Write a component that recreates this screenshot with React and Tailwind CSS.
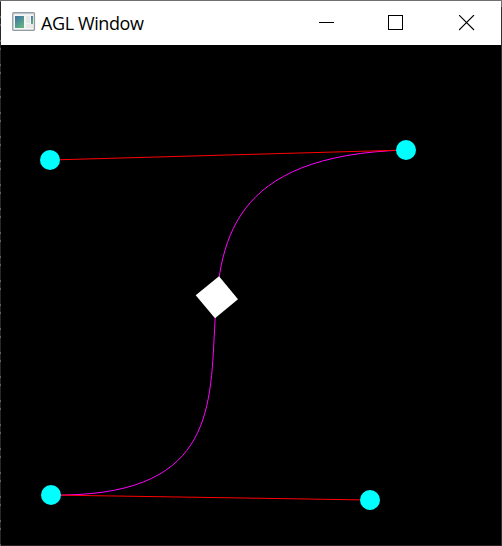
function WindowIcon() {
  return (
    <svg width="24" height="20" viewBox="0 0 24 20" className="shrink-0" shapeRendering="crispEdges">
      <defs>
        <linearGradient id="pane" x1="0" y1="0" x2="0.6" y2="1">
          <stop offset="0" stopColor="#3b70a5" />
          <stop offset="1" stopColor="#61b184" />
        </linearGradient>
      </defs>
      <rect x="0.75" y="0.75" width="21.7" height="17.7" rx="1" fill="#eceeef" stroke="#969ba1" strokeWidth="1.3" shapeRendering="auto" />
      <rect x="2" y="1" width="20" height="1" fill="#bcc4cc" />
      <rect x="2" y="3" width="19" height="14" fill="#f5f5f5" />
      <rect x="3" y="4" width="9" height="12" fill="url(#pane)" />
      <rect x="14" y="4" width="4" height="7" fill="#e6e6e6" />
      <rect x="14" y="12" width="7" height="4" fill="#e9e9e9" />
      <rect x="19" y="4" width="2" height="8" fill="url(#pane)" />
    </svg>
  );
}

function TitleBar() {
  return (
    <header className="flex h-[44px] shrink-0 items-center bg-white pl-[11px] text-black">
      <div className="mb-[3px]">
        <WindowIcon />
      </div>
      <h1 className="ml-[5px] flex-1 font-['Open_Sans','Noto_Sans',sans-serif] text-[18px] leading-6 tracking-[-0.4px] whitespace-nowrap">
        AGL Window
      </h1>
      <div className="flex h-full">
        <button aria-label="Minimize" className="flex w-[70px] items-start justify-center pt-[14px] pl-[2px]">
          <svg width="16" height="16" shapeRendering="crispEdges">
            <path d="M0 7.5H15" stroke="#000" />
          </svg>
        </button>
        <button aria-label="Maximize" className="flex w-[70px] items-start justify-center pt-[14px]">
          <svg width="16" height="16" shapeRendering="crispEdges">
            <rect x="0.5" y="0.5" width="14" height="14" fill="none" stroke="#000" />
          </svg>
        </button>
        <button aria-label="Close" className="flex w-[70px] items-start justify-center pt-[14px] pl-[2px]">
          <svg width="16" height="16">
            <path d="M0 0L15 15M15 0L0 15" stroke="#000" strokeWidth="1.1" />
          </svg>
        </button>
      </div>
    </header>
  );
}

const points = [
  [51, 495],
  [370, 500],
  [50, 160],
  [406, 150],
];

function CurveCanvas() {
  return (
    <svg width="500" height="500" viewBox="1 45 500 500" className="block bg-black">
      <path d="M51 495C370 500 50 160 406 150" fill="none" stroke="#f0f" strokeWidth="1" />
      <path d="M51 495L370 500M50 160L406 150" fill="none" stroke="#f00" strokeWidth="1" />
      {points.map(([x, y]) => (
        <circle key={`${x}-${y}`} cx={x} cy={y} r="10" fill="#0ff" />
      ))}
      <path d="M219 276.3L238 299.2L215 318.2L195.7 295.3Z" fill="#fff" />
    </svg>
  );
}

export default function App() {
  return (
    <main className="flex h-[546px] w-[502px] overflow-hidden border-t border-t-[#707070] bg-black">
      <div className="w-px bg-[repeating-linear-gradient(to_bottom,#606060_0_1px,#272727_1px_15px,#606060_15px_17px,#272727_17px_23px,#606060_23px_24px)]" />
      <div className="flex w-[500px] flex-col border-b border-b-[#241e20]">
        <TitleBar />
        <CurveCanvas />
      </div>
      <div className="w-px bg-[linear-gradient(to_bottom,#707070_6px,#303030_6px)]" />
    </main>
  );
}
